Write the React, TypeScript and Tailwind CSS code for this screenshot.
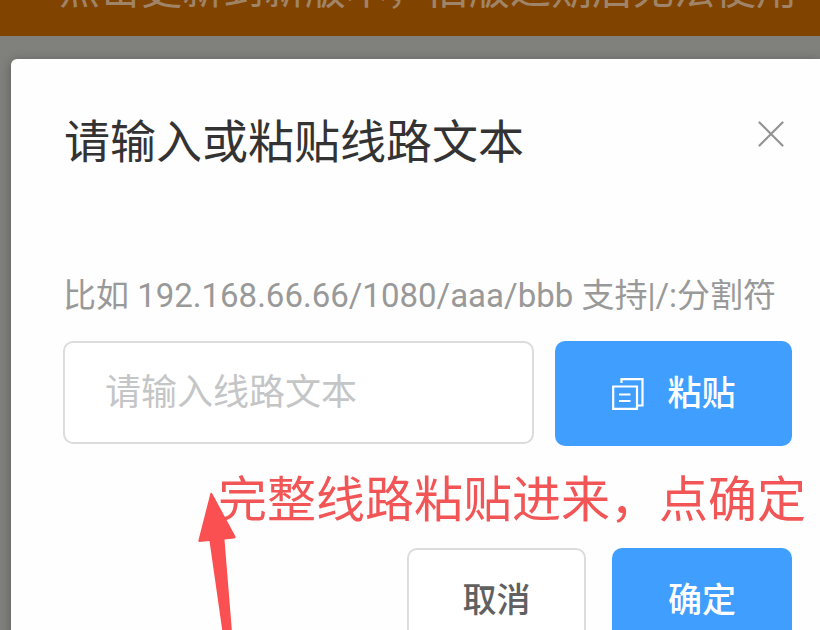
import React, { useState } from 'react'

const CopyIcon: React.FC = () => (
  <svg
    className="h-8 w-8 shrink-0"
    viewBox="0 0 32 32"
    fill="none"
    stroke="currentColor"
    strokeWidth="2.2"
    aria-hidden="true"
  >
    <path d="M9.500 5V1.200H30.500V27.500H26" />
    <path d="M1.200 8.500h23.800v22.300H1.200z" />
    <path d="M7 16.500h11.500M7 23h11.500" />
  </svg>
)

const CloseIcon: React.FC = () => (
  <svg
    className="h-[26px] w-[26px]"
    viewBox="0 0 26 26"
    fill="none"
    stroke="currentColor"
    strokeWidth="2.2"
    strokeLinecap="round"
    aria-hidden="true"
  >
    <path d="M1.5 1.5l23 23M24.5 1.5l-23 23" />
  </svg>
)

const App: React.FC = () => {
  const [line, setLine] = useState('')

  return (
    <div className="relative flex h-screen flex-col overflow-hidden bg-[#80807d] font-[Roboto,'Noto_Sans_CJK_SC',sans-serif]">
      <header className="flex h-9 shrink-0 items-end overflow-hidden bg-[#804300] pb-[22px] pl-[59px]">
        <p className="whitespace-nowrap text-[41px] leading-[48px] text-[#a08468]">
          点击更新到新版本，旧版过期后无法使用
        </p>
      </header>

      <main className="flex flex-1 flex-col pl-[11px] pt-[23px]">
        <div
          role="dialog"
          aria-labelledby="dialog-title"
          className="relative flex-1 rounded-tl-md bg-[#fefefe] pl-[52px] pr-7 pt-[50px] shadow-[0_2px_12px_rgba(0,0,0,0.3)]"
        >
          <div className="flex items-start justify-between pr-2">
            <h1 id="dialog-title" className="pl-px text-[46px] leading-[66px] text-[#333333]">
              请输入或粘贴线路文本
            </h1>
            <button type="button" aria-label="关闭" className="pt-3 text-[#939393]">
              <CloseIcon />
            </button>
          </div>

          <label
            htmlFor="line"
            className="mt-[97px] block whitespace-nowrap text-[33px] leading-[48px] text-[#999999]"
          >
            比如 192.168.66.66/1080/aaa/bbb 支持|/:分割符
          </label>

          <div className="mt-[21px] flex gap-[21px]">
            <input
              id="line"
              type="text"
              value={line}
              onChange={(e) => setLine(e.target.value)}
              placeholder="请输入线路文本"
              className="h-[103px] min-w-0 flex-1 rounded-[10px] border-2 border-[#dcdcdc] bg-white px-10 text-[36px] text-[#606266] outline-none placeholder:text-[#c4c5c6]"
            />
            <button
              type="button"
              className="flex h-[105px] w-[237px] items-center justify-center gap-6 rounded-[10px] bg-[#409eff] text-[34px] font-medium text-white"
            >
              <CopyIcon />
              粘贴
            </button>
          </div>

          <div className="mt-[102px] flex justify-end gap-[26px]">
            <button
              type="button"
              className="h-[104px] w-[179px] rounded-[10px] border-2 border-[#dcdcdc] bg-white text-[34px] font-medium text-[#606060]"
            >
              取消
            </button>
            <button
              type="button"
              className="h-[104px] w-[180px] rounded-[10px] bg-[#409eff] text-[34px] font-medium text-white"
            >
              确定
            </button>
          </div>

          {/* Hint drawn over the dialog */}
          <p className="pointer-events-none absolute left-[207px] top-[407px] whitespace-nowrap text-[49px] leading-[70px] text-[#f25555]">
            完整线路粘贴进来，点确定
          </p>
          <svg
            className="pointer-events-none absolute left-[187px] top-[433px] h-[140px] w-[40px] text-[#fb5052]"
            viewBox="0 0 40 140"
            fill="currentColor"
            aria-hidden="true"
          >
            <path d="M12.500 1Q13.500 0 14.500 2L37.500 44.500Q38 46 36 46.500L26.500 47.500L34 140H24.500L11.500 49L1.500 50Q0 50 .5 48Z" />
          </svg>
        </div>
      </main>
    </div>
  )
}

export default App
